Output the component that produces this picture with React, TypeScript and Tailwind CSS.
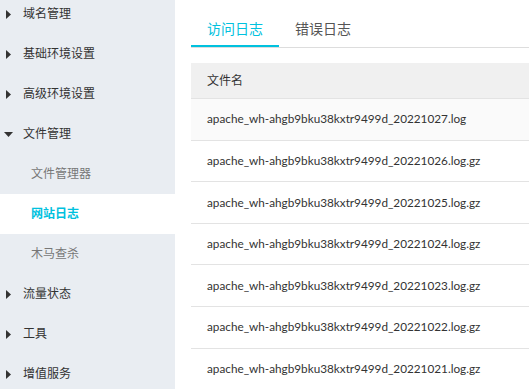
import React from 'react';

const FONT = { fontFamily: 'Lato, "Noto Sans CJK SC", sans-serif' };

type NavItem = { label: string; kind: 'group' | 'open' | 'sub' | 'active' };

const nav: NavItem[] = [
  { label: '域名管理', kind: 'group' },
  { label: '基础环境设置', kind: 'group' },
  { label: '高级环境设置', kind: 'group' },
  { label: '文件管理', kind: 'open' },
  { label: '文件管理器', kind: 'sub' },
  { label: '网站日志', kind: 'active' },
  { label: '木马查杀', kind: 'sub' },
  { label: '流量状态', kind: 'group' },
  { label: '工具', kind: 'group' },
  { label: '增值服务', kind: 'group' },
];

const files = [
  'apache_wh-ahgb9bku38kxtr9499d_20221027.log',
  'apache_wh-ahgb9bku38kxtr9499d_20221026.log.gz',
  'apache_wh-ahgb9bku38kxtr9499d_20221025.log.gz',
  'apache_wh-ahgb9bku38kxtr9499d_20221024.log.gz',
  'apache_wh-ahgb9bku38kxtr9499d_20221023.log.gz',
  'apache_wh-ahgb9bku38kxtr9499d_20221022.log.gz',
  'apache_wh-ahgb9bku38kxtr9499d_20221021.log.gz',
];

function Caret({ open }: { open: boolean }) {
  if (open) {
    return (
      <svg width="9" height="5" viewBox="0 0 9 5" className="ml-[4px] mr-[10px]">
        <path d="M0 0 L9 0 L4.5 5 Z" fill="#333" />
      </svg>
    );
  }
  return (
    <svg width="5" height="9" viewBox="0 0 5 9" className="ml-[6px] mr-[12px]">
      <path d="M0 0 L5 4.5 L0 9 Z" fill="#333" />
    </svg>
  );
}

function Sidebar() {
  return (
    <div className="w-[175px] shrink-0 bg-[#e9edf2] h-[389px] overflow-hidden">
      <div className="-mt-[6px]">
        {nav.map((item, i) => {
          if (item.kind === 'sub' || item.kind === 'active') {
            const active = item.kind === 'active';
            return (
              <div
                key={i}
                className={`h-10 flex items-center pl-[31px] text-[12px] ${
                  active ? 'bg-white text-[#00c1de] font-semibold' : 'text-[#777]'
                }`}
              >
                {item.label}
              </div>
            );
          }
          return (
            <div key={i} className="h-10 flex items-center text-[12px] text-[#333]">
              <Caret open={item.kind === 'open'} />
              {item.label}
            </div>
          );
        })}
      </div>
    </div>
  );
}

export default function App() {
  return (
    <div className="flex w-[529px] h-[389px] overflow-hidden bg-white" style={FONT}>
      <Sidebar />
      <div className="flex-1 min-w-0 pl-4">
        <div className="flex border-b border-[#dddddd] mt-[18px]">
          <div className="px-4 h-[29px] text-[14px] text-[#00c1de] border-b-2 border-[#00c1de] -mb-px leading-[22px]">
            访问日志
          </div>
          <div className="px-4 h-[29px] text-[14px] text-[#555] leading-[22px]">错误日志</div>
        </div>
        <div className="mt-[15px]">
          <div className="h-[36px] bg-[#f0f0f0] border-b border-[#e3e3e3] flex items-center pl-4 text-[12px] text-[#333]">
            文件名
          </div>
          {files.map((f, i) => (
            <div
              key={f}
              className={`h-[41.6px] border-b border-[#e3e3e3] flex items-center pl-4 text-[11.75px] text-[#333] ${
                i === 0 ? 'bg-[#fafafa]' : 'bg-white'
              }`}
            >
              {f}
            </div>
          ))}
        </div>
      </div>
    </div>
  );
}
